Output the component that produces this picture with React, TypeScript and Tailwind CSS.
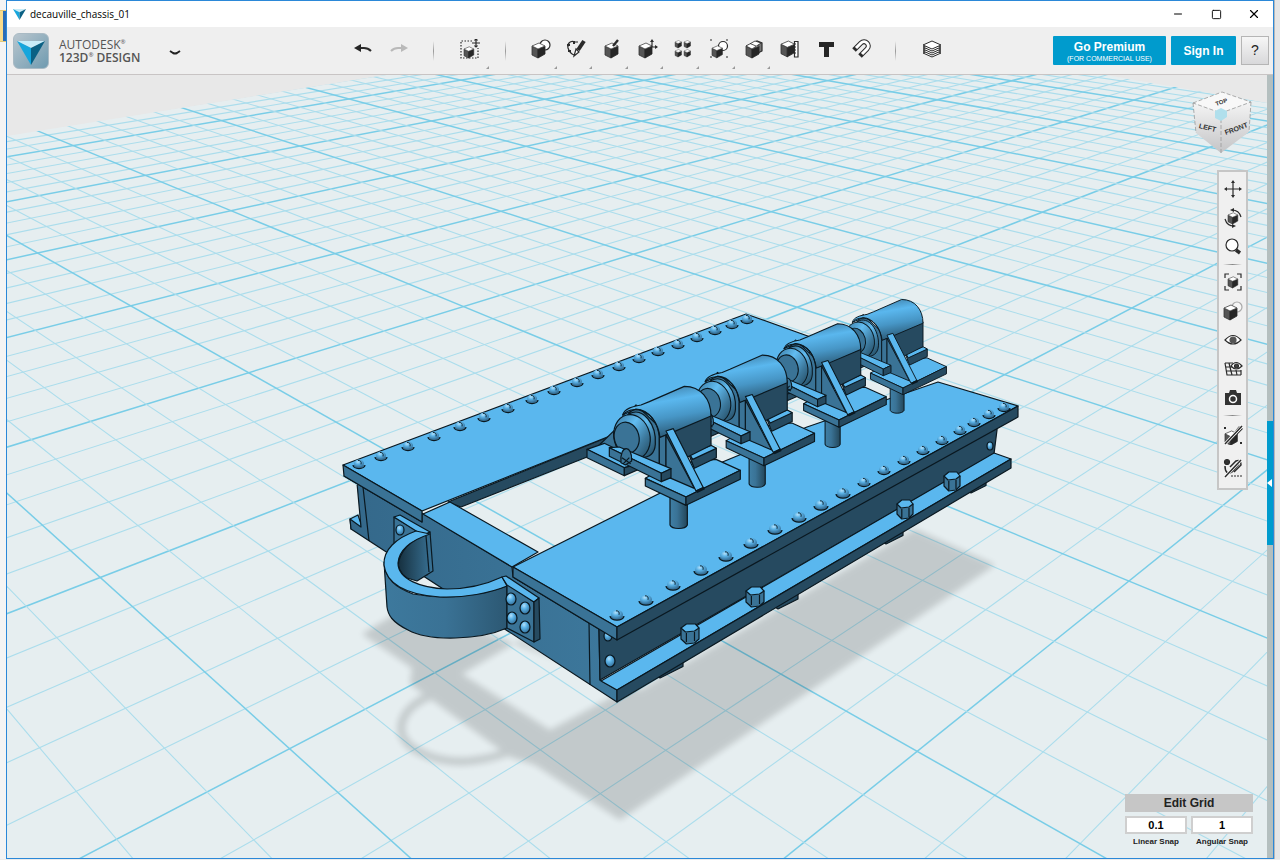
import type { ReactNode } from 'react';
import { Minus, Square, X } from 'lucide-react';

const TOP = '#5ab7ee';
const MID = '#3a7396';
const DARK = '#264a60';
const INK = '#0a1820';

// Vanishing points of the two line families on the work plane
const HORIZON = -196;
const VP_RIGHT = 2095;
const VP_LEFT = -755;

function gridLine(vpX: number, crossX: number) {
  const t = 5;
  return {
    x1: vpX,
    y1: HORIZON,
    x2: vpX + (crossX - vpX) * t,
    y2: HORIZON + 596 * t,
  };
}

function WorkPlane() {
  const lines: { x1: number; y1: number; x2: number; y2: number; major: boolean }[] = [];
  for (let i = -23; i <= 24; i++) {
    lines.push({ ...gridLine(VP_RIGHT, 160 + 79.6 * i), major: i % 5 === 0 });
  }
  for (let i = -16; i <= 33; i++) {
    lines.push({ ...gridLine(VP_LEFT, 690 + 78.6 * i), major: i % 5 === 0 });
  }
  return (
    <g clipPath="url(#plane)">
      <rect x="0" y="60" width="1280" height="800" fill="#e6eef0" />
      {lines.map((line, i) => (
        <line
          key={i}
          x1={line.x1}
          y1={line.y1}
          x2={line.x2}
          y2={line.y2}
          stroke={line.major ? '#79cde7' : '#abddec'}
          strokeWidth={line.major ? 1.5 : 1.1}
        />
      ))}
    </g>
  );
}

function Shadow() {
  return (
    <g filter="url(#soft)" opacity="0.15">
      <path
        fillRule="evenodd"
        fill="#000"
        d="M362 634 L410 605 L640 690 L915 529 L995 565 L620 820 L535 765 L510 757 L410 684 L412 668Z M462 674 L520 640 L625 690 L550 730Z"
      />
      <path d="M440 693 C400 702 386 738 422 753 C452 768 490 761 520 747" fill="none" stroke="#000" strokeWidth="8" />
    </g>
  );
}

function Rivet({ x, y, r = 7 }: { x: number; y: number; r?: number }) {
  return (
    <g>
      <path d={`M${x - r} ${y + 1} a${r} ${r * 0.6} 0 0 0 ${r * 2} 0`} fill={MID} strokeWidth="1.2" />
      <ellipse cx={x} cy={y - 0.5} rx={r - 1} ry={r * 0.65} fill="url(#ball)" stroke="none" />
      <path d={`M${x - 1} ${y - r * 0.6} q4 0 3 4`} fill="none" strokeWidth="0.9" />
    </g>
  );
}

const leftRivets = [
  [359, 464], [381, 456], [408, 446], [434, 436], [460, 426], [484, 417], [508, 408], [532, 399], [554, 390], [577, 382],
  [598, 374], [619, 366], [639, 358], [658, 351], [678, 344], [697, 337], [715, 330], [732, 324], [747, 319],
];

const rightRivets = [
  [617, 615], [646, 600], [673, 585], [701, 570], [726, 556], [751, 543], [775, 529], [799, 517], [821, 505], [843, 493],
  [864, 482], [884, 470], [904, 460], [923, 450], [942, 440], [960, 430], [974, 422], [989, 414], [1004, 407],
];

const bolts = [[690, 633, 9], [755, 596, 9], [905, 509, 8], [952, 481, 8]];

const pads = [[657, 678, 23], [775, 609, 20], [883, 544, 17], [968, 493, 15]];

function Chassis() {
  return (
    <g stroke={INK} strokeWidth="1.2" strokeLinejoin="round">
      {/* left beam */}
      <path d="M350 519 L358 515 L362 527 L351 529Z" fill={TOP} />
      <path
        d="M344 476 L422 522 L422 513 L512 567 L513 577 L607 634 L599 630 L600 680 L617 690 L617 702 L351 529 L350 519 L361 527 L357 483Z"
        fill="url(#front)"
      />
      <path d="M363 487 L422 521 M363 487 L369 541 M513 577 L589 622 L590 685" fill="none" />
      <path d="M448 502 L640 424 L640 436 L461 507Z" fill={DARK} />
      <path d="M343 465 L746 314 L830 344 L640 424 L422 511Z" fill={TOP} />
      <path d="M343 465 L422 511 L422 522 L344 476Z" fill={MID} />
      <path d="M423 514 L450 502 L538 552 L512 567Z" fill={TOP} />
      {/* right beam */}
      {pads.map(([x, y, w]) => (
        <path key={x} d={`M${x} ${y - 2} l3 2 l${w} -${w * 0.5} l0 -6z`} fill={DARK} />
      ))}
      <path d="M599 629 L997 420 L997 430 L994 454 L600 680Z" fill={DARK} />
      <path d="M601 681 L994 453 L1011 459 L617 690Z" fill={TOP} />
      <path d="M617 690 L1011 459 L1011 468 L617 702Z" fill={DARK} />
      {[[610, 661, 5], [990, 446, 3], [608, 636, 4]].map(([x, y, r]) => (
        <ellipse key={x} cx={x} cy={y} rx={r} ry={r + 1} fill="url(#ball)" />
      ))}
      <path d="M513 567 L720 463 L807 427 L938 382 L1018 406 L617 627Z" fill={TOP} />
      <path d="M513 567 L617 627 L617 640 L513 577Z" fill={MID} />
      <path d="M617 627 L1018 406 L1018 417 L617 640Z" fill={DARK} />
      {bolts.map(([x, y, r]) => (
        <g key={x}>
          <path d={`M${x - r} ${y - 5} l0 ${r + 2} l${r * 0.6} 5 l${r * 0.9} -1 l${r * 0.5} -4 l0 -${r + 2}z`} fill={MID} />
          <path d={`M${x - r} ${y - 5} l${r * 0.6} -4 l${r} 0 l${r * 0.4} 4 l-${r * 0.5} 3 l-${r} 1z`} fill={TOP} />
          <path d={`M${x - r * 0.4} ${y} v9 M${x + r * 0.5} ${y - 1} v9`} />
        </g>
      ))}
      {leftRivets.map(([x, y]) => (
        <Rivet key={x} x={x} y={y} r={6} />
      ))}
      {rightRivets.map(([x, y]) => (
        <Rivet key={x} x={x} y={y} r={x < 850 ? 7 : 6} />
      ))}
    </g>
  );
}

function Hook() {
  return (
    <g stroke={INK} strokeWidth="1.2" strokeLinejoin="round">
      <path d="M394 517 L427 537 L427 575 L394 555Z" fill={MID} />
      <path d="M394 517 L400 515 L430 532 L424 536Z" fill={TOP} />
      <ellipse cx="400" cy="530" rx="4" ry="5" fill="url(#ball)" />
      <path d="M430 532 L433 571 L417 581 L407 578 C400 573 397 566 399 560 C404 545 416 538 430 532Z" fill="url(#inner)" />
      <path d="M426 536 L429 572" fill="none" />
      <path
        d="M384 562 C386 580 395 587 413 594 C445 600 480 596 507 586 L507 628 C480 640 430 642 408 630 C392 622 388 615 387 607Z"
        fill="url(#band)"
      />
      <path
        d="M416 531 C396 538 383 550 384 565 C386 583 405 595 440 597 C465 598 490 593 507 586 L502 577 C485 585 465 589 447 589 C420 588 398 579 398 563 C399 549 412 540 430 534Z"
        fill={TOP}
      />
      <path d="M507 584 L534 602 L534 642 L507 628Z" fill={MID} />
      <path d="M502 577 L506 576 L539 598 L534 602 L507 585Z" fill={TOP} />
      <path d="M534 602 L539 598 L540 639 L534 642Z" fill={DARK} />
      {[[511, 599], [525, 608], [512, 618], [525, 627]].map(([x, y]) => (
        <ellipse key={`${x}-${y}`} cx={x} cy={y} rx="5" ry="6" fill="url(#ball)" />
      ))}
    </g>
  );
}

// One axle box, in its own drawing units with the plate corner at (350, 648)
function Motor({ x, y, size }: { x: number; y: number; size: number }) {
  return (
    <g
      transform={`translate(${x} ${y}) scale(${size / 3}) translate(-350 -648)`}
      stroke={INK}
      strokeWidth="3.6"
      strokeLinejoin="round"
    >
      <path d="M302 640 V732 C308 746 348 746 354 732 V640Z" fill="url(#post)" />
      <path d="M90 492 L135 448 L160 520Z" fill={MID} />
      <path d="M53 505 L105 487 L225 545 L165 560Z" fill={TOP} />
      <path d="M53 505 L165 560 V584 L53 530Z" fill={MID} />
      <path d="M165 560 L225 545 V558 L165 584Z" fill={DARK} />
      <path d="M228 592 L300 550 L440 535 L513 568 L350 648Z" fill={TOP} />
      <path d="M228 592 L350 648 V673 L228 615Z" fill={MID} />
      <path d="M350 648 L513 568 V595 L350 673Z" fill={DARK} />
      <path d="M360 524 L425 495 L441 502 V530 L375 562Z" fill={DARK} />
      <path d="M360 518 L425 493 L441 502 L370 535Z" fill={TOP} />
      <path d="M272 465 L425 400 V493 L290 560Z" fill={DARK} />
      <path d="M160 420 L200 372 L272 440 V560 L200 540Z" fill={MID} />
      <path d="M160 402 C165 382 190 376 215 372 L240 362 L345 316 C395 316 425 355 425 405 L272 470 C266 425 240 386 200 384Z" fill="url(#barrel)" />
      <path d="M160 404 C180 370 262 380 270 470 V558" fill="none" />
      <path d="M180 398 C220 376 262 430 258 490 C256 520 236 530 215 530Z" fill="url(#ring)" />
      <ellipse cx="188" cy="468" rx="54" ry="68" transform="rotate(-14 188 468)" fill="url(#ring)" />
      <ellipse cx="172" cy="470" rx="37" ry="47" transform="rotate(-14 172 470)" fill={MID} />
      <path d="M270 470 L290 462 V562 L270 556Z" fill={MID} />
      <path d="M290 462 L375 622 L300 590 L290 555Z" fill={MID} />
      <path d="M120 500 L150 498 L305 563 L276 577Z" fill={TOP} />
      <path d="M120 500 L276 577 V602 L120 526Z" fill={MID} />
      <path d="M276 577 L305 563 V590 L276 602Z" fill={DARK} />
      <path d="M155 545 C150 490 190 490 187 540 L168 552Z M158 530 L184 548 M180 530 L162 548" fill={MID} />
      <path d="M290 450 L312 443 L402 620 L380 630Z" fill={TOP} />
      <path d="M382 632 L405 621" strokeWidth="9" />
    </g>
  );
}

function Scene() {
  return (
    <svg viewBox="7 75 1260 783" preserveAspectRatio="xMidYMid slice" className="block h-full w-full" role="img" aria-label="3D model">
      <defs>
        <clipPath id="plane">
          <path d="M7 136 L392 74 H1100 L1267 103 V860 H7Z" />
        </clipPath>
        <filter id="soft" x="-10%" y="-10%" width="120%" height="120%">
          <feGaussianBlur stdDeviation="3" />
        </filter>
        <radialGradient id="ball" cx="0.4" cy="0.3" r="0.7">
          <stop offset="0" stopColor="#b4e0fa" />
          <stop offset="0.4" stopColor="#5cb4e8" />
          <stop offset="1" stopColor="#35709a" />
        </radialGradient>
        <linearGradient id="front" x1="0" y1="0" x2="1" y2="0">
          <stop offset="0" stopColor="#34688a" />
          <stop offset="1" stopColor="#3d789c" />
        </linearGradient>
        <linearGradient id="inner" x1="0" y1="0" x2="1" y2="0">
          <stop offset="0" stopColor="#16303f" />
          <stop offset="1" stopColor="#3a7498" />
        </linearGradient>
        <linearGradient id="band" x1="0" y1="0" x2="1" y2="0">
          <stop offset="0" stopColor="#3d799d" />
          <stop offset="0.5" stopColor="#3a7295" />
          <stop offset="1" stopColor="#2c5873" />
        </linearGradient>
        <linearGradient id="post" x1="0" y1="0" x2="1" y2="0">
          <stop offset="0" stopColor="#3f7fa5" />
          <stop offset="0.4" stopColor="#3a7396" />
          <stop offset="1" stopColor="#234659" />
        </linearGradient>
        <linearGradient id="barrel" x1="0.35" y1="0" x2="0.65" y2="1">
          <stop offset="0" stopColor="#3d7ca4" />
          <stop offset="0.3" stopColor="#5ab7ee" />
          <stop offset="0.6" stopColor="#4796c6" />
          <stop offset="1" stopColor="#264f68" />
        </linearGradient>
        <linearGradient id="ring" x1="0.2" y1="0" x2="0.9" y2="1">
          <stop offset="0" stopColor="#3f80a8" />
          <stop offset="0.35" stopColor="#62bdf2" />
          <stop offset="0.7" stopColor="#3c789c" />
          <stop offset="1" stopColor="#234a60" />
        </linearGradient>
      </defs>
      <rect x="0" y="0" width="1280" height="860" fill="#e8e8e8" />
      <WorkPlane />
      <Shadow />
      <Chassis />
      <Hook />
      <Motor x={903} y={388} size={0.8} />
      <Motor x={839} y={420} size={0.87} />
      <Motor x={764} y={458} size={0.93} />
      <Motor x={686} y={497} size={1} />
    </svg>
  );
}

function Cube({ x = 0, y = 0, s = 1 }: { x?: number; y?: number; s?: number }) {
  return (
    <g transform={`translate(${x} ${y}) scale(${s})`} strokeLinejoin="round">
      <path d="M0 4 L6 7 V16 L0 13Z" fill="#555" stroke="#333" strokeWidth="0.8" />
      <path d="M6 7 L13 4 V12 L6 16Z" fill="#262626" stroke="#262626" strokeWidth="0.8" />
      <path d="M0 4 L7 1 L13 4 L6 7Z" fill="#fff" stroke="#444" strokeWidth="0.8" />
    </g>
  );
}

function Icon({ children }: { children: ReactNode }) {
  return (
    <svg viewBox="0 0 20 20" width="20" height="20" fill="none" stroke="#2b2b2b" strokeWidth="1.2" aria-hidden="true">
      {children}
    </svg>
  );
}

function Tool({ label, menu, className = 'w-9', children }: { label: string; menu?: boolean; className?: string; children: ReactNode }) {
  return (
    <button type="button" aria-label={label} className={`relative flex h-12 items-center justify-center pb-1 ${className}`}>
      {children}
      {menu && (
        <svg viewBox="0 0 3 3" width="3" height="3" className="absolute right-0.5 bottom-1.5">
          <path d="M3 0 V3 H0Z" fill="#999" />
        </svg>
      )}
    </button>
  );
}

function Divider({ className }: { className: string }) {
  return (
    <div className={`flex justify-center ${className}`}>
      <div className="h-5 w-px bg-linear-to-b from-transparent via-[#999] to-transparent" />
    </div>
  );
}

function LogoMark({ size }: { size: number }) {
  return (
    <svg viewBox="0 0 28 24" width={size} height={size} aria-hidden="true">
      <path d="M0 0 L28 0 L14 7Z" fill="#c9ecf8" />
      <path d="M0 0 L14 7 V24Z" fill="#17a6dc" />
      <path d="M28 0 L14 7 V24Z" fill="#0b6184" />
    </svg>
  );
}

const modelTools: { label: string; menu?: boolean; icon: ReactNode }[] = [
  { label: 'Primitives', menu: true, icon: <><circle cx="14" cy="6" r="5" fill="#fff" /><Cube x={1} y={3} /></> },
  {
    label: 'Sketch',
    menu: true,
    icon: (
      <>
        <path d="M9 3 C4 1 1 5 2 9 C3 12 5 15 8 16 M9 3 H12" />
        <path d="M1 6h3M8 2v3M2 12h3" strokeWidth="2" />
        <path d="M18 2 L12 11" strokeWidth="4" />
        <path d="M10 10 L13 13 L8 17Z" fill="#fff" />
      </>
    ),
  },
  { label: 'Construct', menu: true, icon: <><Cube x={3} y={3} /><path d="M16 1 L11 7" strokeWidth="2.4" /></> },
  { label: 'Modify', menu: true, icon: <><Cube x={1} y={3} /><path d="M14 8 V2 M14 8 H19" /><path d="M12 3 L14 0 L16 3Z M17 6 L20 8 L17 10Z" fill="#2b2b2b" stroke="none" /></> },
  { label: 'Pattern', menu: true, icon: <><Cube x={2} y={1} s={0.5} /><Cube x={11} y={1} s={0.5} /><Cube x={2} y={10} s={0.5} /><Cube x={11} y={10} s={0.5} /></> },
  { label: 'Grouping', menu: true, icon: <><circle cx="14" cy="7" r="4.5" fill="#fff" /><Cube x={3} y={6} s={0.8} /><path d="M1 1h2M17 1h2M1 18h2M17 18h2" /></> },
  { label: 'Combine', menu: true, icon: <><path d="M8 5 L13 2 L18 4 V12 L12 15" fill="#777" /><Cube x={2} y={3} /><path d="M2 7 L11 2 L17 4 L8 10Z" fill="#fff" strokeWidth="0.8" /><path d="M6 4.500 L12 7" strokeWidth="0.8" /></> },
  { label: 'Measure', icon: <><Cube x={1} y={1} s={1.05} /><path d="M14.5 2.5 H18 V18 H14.5Z M14 5h2M14 8h2M14 11h2M14 14h2" fill="#fff" /></> },
  { label: 'Text', icon: <path d="M3 3 H18 V8 H13 V18 H8 V8 H3Z" fill="#262626" stroke="none" /> },
  {
    label: 'Snap',
    icon: (
      <>
        <path d="M3 11 L10 4 C14 0 20 6 16 10 L9 17" strokeWidth="5" />
        <path d="M5 9 L10 4 C14 0 20 6 16 10 L11 15" stroke="#fff" strokeWidth="3" />
      </>
    ),
  },
];

function Toolbar() {
  return (
    <header className="flex h-12 shrink-0 items-center border-b border-[#c8c4c4] bg-[#efefef]">
      <div className="flex w-[338px] items-center pl-1.5">
        <div className="flex h-9 w-9 items-center justify-center rounded-md border border-[#a9bac4] bg-linear-to-br from-[#b9c6ce] to-[#6f9bb0] pt-1">
          <LogoMark size={28} />
        </div>
        <div className="ml-2.5 w-[86px] font-['Open_Sans',sans-serif] text-[12px] leading-[13px] whitespace-nowrap text-[#555]">
          <div className="flex items-start">
            AUTODESK<span className="text-[6px] leading-2">®</span>
          </div>
          <div className="flex items-start font-semibold">
            123D<span className="text-[6px] leading-2">®</span>&nbsp;DESIGN
          </div>
        </div>
        <button type="button" aria-label="Main menu" className="ml-5 flex h-6 w-5 items-center justify-center pt-1">
          <svg viewBox="0 0 12 6" width="12" height="6">
            <path d="M1 1 L4 3 Q6 4 8 3 L11 1" fill="none" stroke="#222" strokeWidth="2" />
          </svg>
        </button>
      </div>
      <Tool label="Undo">
        <Icon><path d="M6 9 H11 Q15 9 18 12" strokeWidth="2" /><path d="M1 9 L8 5 V13Z" fill="#262626" stroke="none" /></Icon>
      </Tool>
      <Tool label="Redo">
        <Icon><path d="M14 9 H9 Q5 9 2 12" stroke="#b9b9b9" strokeWidth="2" /><path d="M19 9 L12 5 V13Z" fill="#b9b9b9" stroke="none" /></Icon>
      </Tool>
      <Divider className="w-8" />
      <Tool label="Transform" menu className="w-[42px]">
        <Icon>
          <path d="M12 2 H1 V19 H18 V9" strokeDasharray="1.500 1.500" />
          <Cube x={4} y={7} s={0.75} />
          <path d="M16 0 V8 M12 4 H20" />
          <path d="M14.500 1.500 L16 0 L17.500 1.500 M14.500 6.500 L16 8 L17.500 6.500" />
        </Icon>
      </Tool>
      <Divider className="w-7" />
      <div className="ml-1 grid w-[356px] grid-cols-10">
        {modelTools.map((tool) => (
          <Tool key={tool.label} label={tool.label} menu={tool.menu} className="w-full">
            <Icon>{tool.icon}</Icon>
          </Tool>
        ))}
      </div>
      <Divider className="w-8" />
      <Tool label="Material" className="w-[42px]">
        <Icon>
          {[14, 12, 10, 8, 6].map((y) => (
            <path key={y} d={`M1 ${y} L10 ${y + 4} L19 ${y} L10 ${y - 4}Z`} fill="#fff" strokeWidth="1" />
          ))}
        </Icon>
      </Tool>
      <div className="ml-auto flex gap-[5px] pr-1">
        <button type="button" className="flex h-[29px] w-[113px] flex-col items-center justify-center rounded-[1px] bg-[#009bcd] text-white">
          <span className="text-[12px] leading-4 font-bold">Go Premium</span>
          <span className="text-[7px] leading-2">(FOR COMMERCIAL USE)</span>
        </button>
        <button type="button" className="h-[29px] w-[65px] rounded-[1px] bg-[#009bcd] text-[12px] font-bold text-white">
          Sign In
        </button>
        <button type="button" className="h-[29px] w-7 border border-[#b5b5b5] bg-linear-to-b from-[#f6f6f6] to-[#d8d8da] text-[14px] text-[#222]">
          ?
        </button>
      </div>
    </header>
  );
}

function ViewCube() {
  return (
    <svg viewBox="0 0 60 64" width="60" height="64" className="absolute top-4 right-[15px]" role="img" aria-label="View cube">
      <defs>
        <linearGradient id="cubeSide" x1="0" y1="0" x2="0" y2="1">
          <stop offset="0" stopColor="#f4f4f4" />
          <stop offset="1" stopColor="#c4c4c6" />
        </linearGradient>
      </defs>
      <path d="M1 12 L29 22 V62 L4 42Z" fill="url(#cubeSide)" />
      <path d="M29 22 L59 11 L57 41 L29 62Z" fill="url(#cubeSide)" />
      <path d="M1 12 L30 1 L59 11 L29 22Z" fill="#f8f8f8" />
      <path d="M1 12 L30 1 L59 11 L29 22Z M29 22 V62 M1 12 L4 42 M59 11 L57 41" fill="none" stroke="#999" strokeWidth="0.8" strokeDasharray="4 2" />
      <path d="M23 20 L29 17 L35 20 V26 L29 30 L23 27Z" fill="#b0dfec" />
      <g fontFamily="Liberation Sans Narrow, Liberation Sans, sans-serif" fontWeight="bold" fontSize="9" fill="#333" textAnchor="middle">
        <text transform="translate(15 39) rotate(14)" fontSize="7">LEFT</text>
        <text transform="translate(45 40) rotate(-20)" fontSize="7">FRONT</text>
        <text transform="translate(30 13) rotate(-18)" fontSize="6">TOP</text>
      </g>
    </svg>
  );
}

const viewTools: { label: string; icon: ReactNode }[][] = [
  [
    { label: 'Pan', icon: <><path d="M10 3 V17 M3 10 H17" /><path d="M10 1 L12 4 H8Z M10 19 L12 16 H8Z M1 10 L4 8 V12Z M19 10 L16 8 V12Z" fill="#2b2b2b" stroke="none" /></> },
    { label: 'Orbit', icon: <><Cube x={5} y={4} s={0.75} /><path d="M9 2 Q16 2 18 9 M11 18 Q4 18 2 11" /><path d="M7 2 L11 0 V4Z M13 18 L9 16 V20Z" fill="#2b2b2b" stroke="none" /></> },
    { label: 'Zoom', icon: <><circle cx="9" cy="8" r="6" fill="#fff" /><path d="M13 13 L17 16" strokeWidth="3.500" /></> },
  ],
  [
    { label: 'Fit', icon: <><Cube x={5} y={4} s={0.75} /><path d="M2 6 V2 H6 M14 2 H18 V6 M18 14 V18 H14 M6 18 H2 V14" /></> },
    { label: 'Materials', icon: <><circle cx="14" cy="6" r="5" fill="#f6f6f6" stroke="#aaa" /><Cube x={1} y={3} /></> },
    { label: 'Visibility', icon: <><path d="M2 10 Q10 1 18 10 Q10 18 2 10Z" fill="#fff" /><circle cx="10" cy="10" r="3" fill="#555" stroke="#555" /></> },
    { label: 'Grid visibility', icon: <><path d="M2 4 H10 M2 4 L4 16 H18 M3 8 H10 M3 12 H18 M6 4 L9 16 M13 11 L14 16 M18 11 V16" /><path d="M8 7 Q13 0 19 7 Q13 13 8 7Z" fill="#fff" /><circle cx="13.500" cy="7" r="2" fill="#444" /></> },
    { label: 'Screenshot', icon: <><path d="M2 5 H6 L7 2 H13 L14 5 H18 V17 H2Z" fill="#333" stroke="none" /><circle cx="10" cy="11" r="3.500" fill="#333" stroke="#fff" strokeWidth="1.500" /></> },
  ],
  [
    {
      label: 'Group snapping',
      icon: (
        <>
          <Cube x={2} y={5} s={0.95} />
          <path d="M12 7 L16 2 Q19 1 19 4 L14 9" />
          <path d="M1 3h2M17 18h2" strokeWidth="2" />
          <path d="M2 19 L19 1" stroke="#fff" strokeWidth="3" />
          <path d="M2 19 L19 1" strokeWidth="1.500" />
        </>
      ),
    },
    {
      label: 'Snap while sketching',
      icon: (
        <>
          <circle cx="4" cy="4" r="2.500" fill="#333" />
          <path d="M2 8 C2 14 5 17 9 14 L16 6 M7 9 L13 3 Q18 1 18 7 L11 14" strokeWidth="1.500" />
          <path d="M8 18 H19" strokeDasharray="2 1" />
          <path d="M2 19 L18 2" stroke="#fff" strokeWidth="3" />
          <path d="M2 19 L18 2" strokeWidth="1.500" />
        </>
      ),
    },
  ],
];

function ViewToolbar() {
  return (
    <nav aria-label="View" className="absolute top-[95px] right-[19px] w-[31px] border-2 border-[#c6c6c6] bg-[#f0f0f0] pt-0.5 pb-1">
      {viewTools.map((group, i) => (
        <div key={i}>
          {i > 0 && (
            <div className="flex h-1.5 items-center px-1">
              <div className="h-px w-full bg-linear-to-r from-transparent via-[#888] to-transparent" />
            </div>
          )}
          {group.map((tool) => (
            <button
              key={tool.label}
              type="button"
              aria-label={tool.label}
              className={`flex w-full items-center justify-center ${i === 2 ? 'h-[33px]' : 'h-[29px]'}`}
            >
              <Icon>{tool.icon}</Icon>
            </button>
          ))}
        </div>
      ))}
    </nav>
  );
}

function SnapField({ id, label, value }: { id: string; label: string; value: string }) {
  return (
    <div className="flex flex-col items-center">
      <input
        id={id}
        type="text"
        defaultValue={value}
        className="h-[18px] w-full border-2 border-[#cfcfcf] bg-white text-center text-[11px] font-bold text-black"
      />
      <label htmlFor={id} className="mt-1 text-[8px] leading-2 font-bold whitespace-nowrap text-[#222]">
        {label}
      </label>
    </div>
  );
}

function GridPanel() {
  return (
    <div className="absolute right-3.5 bottom-3 w-32">
      <button type="button" className="block h-[18px] w-full bg-[#c6c6c6] text-[12px] leading-4 font-bold text-[#222]">
        Edit Grid
      </button>
      <div className="mt-1 grid grid-cols-2 gap-1">
        <SnapField id="linear-snap" label="Linear Snap" value="0.1" />
        <SnapField id="angular-snap" label="Angular Snap" value="1" />
      </div>
    </div>
  );
}

export default function App() {
  return (
    <div className="flex h-screen overflow-hidden bg-[#ececec] pb-px font-['Liberation_Sans',Arial,sans-serif]">
      <div className="w-1.5 shrink-0 bg-[#f4f4f4] pt-2.5">
        <div className="h-8 border-y border-[#e2c878] bg-linear-to-r from-[#f9dc8c] from-50% to-[#2a6cb8] to-50%" />
      </div>
      <div className="flex min-w-0 flex-1 flex-col border border-[#2b88d8]">
        <div className="flex h-[26px] shrink-0 items-center bg-white pl-1.5">
          <LogoMark size={13} />
          <h1 className="ml-1 font-['Open_Sans',sans-serif] text-[10px] text-black">decauville_chassis_01</h1>
          <div className="ml-auto flex items-center text-black">
            <button type="button" aria-label="Minimize" className="flex w-[38px] justify-center">
              <Minus size={12} strokeWidth={2} />
            </button>
            <button type="button" aria-label="Maximize" className="flex w-[38px] justify-center">
              <Square size={11} strokeWidth={2} />
            </button>
            <button type="button" aria-label="Close" className="flex w-[38px] justify-center">
              <X size={14} strokeWidth={2} />
            </button>
          </div>
        </div>
        <Toolbar />
        <main className="flex min-h-0 flex-1">
          <div className="relative min-w-0 flex-1 overflow-hidden">
            <Scene />
            <ViewCube />
            <ViewToolbar />
            <GridPanel />
          </div>
          <div className="flex w-1.5 shrink-0 items-center bg-[#b4bfbf] pt-8">
            <button type="button" aria-label="Open parts panel" className="flex h-[124px] w-full items-center bg-[#009bcd]">
              <svg viewBox="0 0 5 8" width="5" height="8">
                <path d="M5 0 V8 L0 4Z" fill="#fff" />
              </svg>
            </button>
          </div>
        </main>
      </div>
      <div className="w-1.5 shrink-0 border-l border-[#b8b8b8] bg-[#e6e6e6]" />
    </div>
  );
}
